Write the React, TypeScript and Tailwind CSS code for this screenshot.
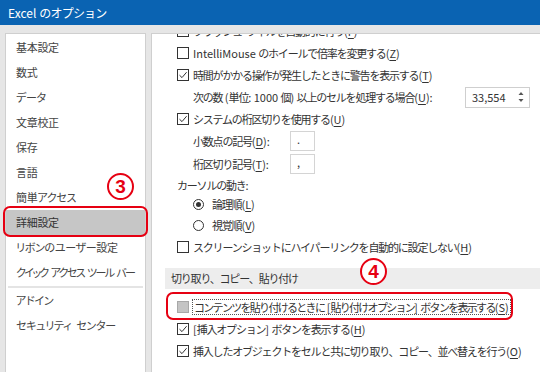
import React from "react";

const font = "font-['Noto_Sans_CJK_JP',sans-serif]";

function Box({ checked = false, disabled = false }: { checked?: boolean; disabled?: boolean }) {
  return (
    <span
      className={`relative flex h-[12px] w-[12px] shrink-0 items-center justify-center border ${
        disabled ? "border-[#a8a8a8] bg-[#c4c4c4]" : "border-[#333] bg-white"
      }`}
    >
      {checked && (
        <svg viewBox="0 0 10 10" className="h-[10px] w-[10px]">
          <path d="M1.5 5.2 L4 7.6 L8.6 2.2" fill="none" stroke="#333" strokeWidth="1" />
        </svg>
      )}
    </span>
  );
}

function Radio({ on = false }: { on?: boolean }) {
  return (
    <span className="flex h-[11px] w-[11px] shrink-0 items-center justify-center rounded-full border border-[#333] bg-white">
      {on && <span className="h-[5px] w-[5px] rounded-full bg-[#333]" />}
    </span>
  );
}

// access key, e.g. (Z) with underlined letter
function Key({ k }: { k: string }) {
  return (
    <span className="tracking-normal">
      (<span className="underline underline-offset-[2px]">{k}</span>)
    </span>
  );
}

function CheckRow({ checked, label, k }: { checked?: boolean; label: React.ReactNode; k: string }) {
  return (
    <div className="flex h-[22px] items-center pl-[25px]">
      <Box checked={checked} />
      <span className="ml-[4px] whitespace-nowrap">
        {label}
        <Key k={k} />
      </span>
    </div>
  );
}

function Circled({ n }: { n: string }) {
  return (
    <span className="flex h-[27px] w-[27px] items-center justify-center rounded-full border-2 border-[#e60012] bg-white font-['Liberation_Sans',sans-serif] text-[19px] font-bold leading-none tracking-normal text-[#e60012]">
      {n}
    </span>
  );
}

const navTop = ["基本設定", "数式", "データ", "文章校正", "保存", "言語", "簡単アクセス"];

export default function App() {
  return (
    <div className={`flex h-[372px] w-[540px] flex-col overflow-hidden bg-[#e6e6e6] ${font}`}>
      {/* title bar */}
      <div className="flex h-[25px] shrink-0 items-center bg-[#0a63b2] pl-[8px] text-[12px] text-white">
        Excel <span className="ml-[3px] tracking-[-0.8px]">のオプション</span>
      </div>

      <div className="flex flex-1 gap-[5px] pl-[5px] pt-[8px]">
        {/* left nav */}
        <div className="relative w-[141px] shrink-0 border border-b-0 border-[#cfcfcf] bg-white pt-[1px] text-[11px] tracking-[-0.3px] text-[#444] [font-feature-settings:'palt'] [word-spacing:3px]">
          {navTop.map((t) => (
            <div key={t} className="flex h-[25px] items-center pl-[10px]">
              {t}
            </div>
          ))}
          <div className="relative flex h-[25px] items-center bg-[#c6c6c6] pl-[10px] text-[#333]">
            詳細設定
            <span className="absolute -bottom-[2px] -left-[3px] -right-[3px] -top-[4px] rounded-[7px] border-[2.5px] border-[#e60012]" />
            <span className="absolute -top-[37px] left-[101px]">
              <Circled n="3" />
            </span>
          </div>
          <div className="flex h-[25px] items-center whitespace-nowrap pl-[10px]">リボンのユーザー設定</div>
          <div className="flex h-[25px] items-center whitespace-nowrap pl-[10px] tracking-[-1.6px] [word-spacing:2px]">
            クイック アクセス ツール バー
          </div>
          <div className="mx-[2px] mt-[1px] h-[2px] bg-[#e4e4e4]" />
          <div className="flex h-[25px] items-center pl-[10px]">アドイン</div>
          <div className="flex h-[25px] items-center whitespace-nowrap pl-[10px]">セキュリティ センター</div>
        </div>

        {/* right content */}
        <div className="flex-1 overflow-hidden border-l border-t border-[#cfcfcf] bg-white text-[11px] tracking-[-1.2px] text-[#333]">
          <div className="-mt-[14px]">
            <CheckRow label={<span className="[word-spacing:3px]">フラッシュ フィルを自動的に行う</span>} k="F" />
            <CheckRow
              label={
                <>
                  <span className="tracking-normal">IntelliMouse </span>のホイールで倍率を変更する
                </>
              }
              k="Z"
            />
            <CheckRow checked label="時間がかかる操作が発生したときに警告を表示する" k="T" />

            <div className="flex h-[22px] items-center pl-[41px]">
              <span className="w-[272px] whitespace-nowrap">
                次の数<span className="tracking-normal"> (</span>単位<span className="tracking-normal">: 1000 </span>個
                <span className="tracking-normal">) </span>以上のセルを処理する場合<Key k="U" />
                <span className="tracking-normal">:</span>
              </span>
              <div className="flex h-[21px] w-[65px] items-center justify-between border border-[#cfcfcf] pl-[6px] pr-[5px] tracking-normal">
                <span>33,554</span>
                <svg viewBox="0 0 6 12" className="h-[12px] w-[6px]">
                  <path d="M3 1 L5.5 4 L0.5 4 Z" fill="#555" />
                  <path d="M3 11 L5.5 8 L0.5 8 Z" fill="#555" />
                </svg>
              </div>
            </div>

            <CheckRow checked label="システムの桁区切りを使用する" k="U" />

            <div className="flex h-[22px] items-center pl-[41px]">
              <span className="w-[97px] whitespace-nowrap">
                小数点の記号<Key k="D" />
                <span className="tracking-normal">:</span>
              </span>
              <div className="flex h-[20px] w-[25px] items-center border border-[#d4d4d4] pb-[4px] pl-[6px]">.</div>
            </div>
            <div className="flex h-[24px] items-center pl-[41px]">
              <span className="w-[97px] whitespace-nowrap">
                桁区切り記号<Key k="T" />
                <span className="tracking-normal">:</span>
              </span>
              <div className="flex h-[20px] w-[25px] items-center border border-[#d4d4d4] pb-[4px] pl-[6px]">,</div>
            </div>

            <div className="flex h-[18px] items-center pl-[25px]">
              カーソルの動き<span className="tracking-normal">:</span>
            </div>
            <div className="flex h-[20px] items-center pl-[41px]">
              <Radio on />
              <span className="ml-[8px]">
                論理順
                <Key k="L" />
              </span>
            </div>
            <div className="flex h-[22px] items-center pl-[41px]">
              <Radio />
              <span className="ml-[8px]">
                視覚順
                <Key k="V" />
              </span>
            </div>
            <CheckRow label="スクリーンショットにハイパーリンクを自動的に設定しない" k="H" />

            <div className="ml-[13px] mt-[10px] flex h-[21px] items-center bg-[#ededed] pl-[6px] text-[#333]">
              切り取り、コピー、貼り付け
            </div>

            <div className="relative mt-[7px] flex h-[22px] items-center pl-[25px]">
              <Box disabled />
              <span className="ml-[3px] whitespace-nowrap border border-dotted border-[#555] px-[1px] leading-[14px] tracking-[-1.7px]">
                コンテンツを貼り付けるときに<span className="tracking-normal"> [</span>貼り付けオプション
                <span className="tracking-normal">] </span>ボタンを表示する<Key k="S" />
              </span>
              <span className="absolute -bottom-[2px] -top-[4px] left-[14px] right-[27px] rounded-[7px] border-[2.5px] border-[#e60012]" />
              <span className="absolute -top-[38px] left-[208px]">
                <Circled n="4" />
              </span>
            </div>
            <CheckRow
              checked
              label={
                <>
                  <span className="tracking-normal">[</span>挿入オプション<span className="tracking-normal">] </span>
                  ボタンを表示する
                </>
              }
              k="H"
            />
            <CheckRow checked label="挿入したオブジェクトをセルと共に切り取り、コピー、並べ替えを行う" k="O" />
          </div>
        </div>
      </div>
    </div>
  );
}
